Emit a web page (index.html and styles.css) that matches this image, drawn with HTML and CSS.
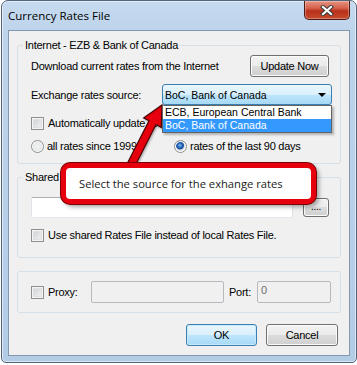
FILE: index.html
```html
<!DOCTYPE html>
<html lang="en">
<head>
  <meta charset="UTF-8">
  <meta name="viewport" content="width=device-width, initial-scale=1.0">
  <title>Currency Rates File</title>
  <link rel="stylesheet" href="styles.css">
</head>
<body>
  <div class="window">
    <div class="titlebar">
      <span class="title">Currency Rates File</span>
      <span class="close">
        <svg width="14" height="11" viewBox="0 0 14 11">
          <path d="M3 2 L11 9 M11 2 L3 9" stroke="#3b3b3b" stroke-width="4.2" stroke-linecap="square"/>
          <path d="M3 2 L11 9 M11 2 L3 9" stroke="#ffffff" stroke-width="2.2" stroke-linecap="square"/>
        </svg>
      </span>
    </div>

    <div class="client">
      <fieldset class="group group-internet">
        <legend>Internet - EZB &amp; Bank of Canada</legend>
        <div class="row row-download">
          <span>Download current rates from the Internet</span>
          <span class="btn btn-update">Update Now</span>
        </div>
        <div class="row row-source">
          <span>Exchange rates source:</span>
          <div class="combo">
            <span class="combo-text">BoC, Bank of Canada</span>
            <span class="combo-arrow"></span>
            <ul class="combo-list">
              <li>ECB, European Central Bank</li>
              <li class="selected">BoC, Bank of Canada</li>
            </ul>
          </div>
        </div>
        <div class="row row-auto">
          <span class="check"></span>
          <span>Automatically update at startup</span>
        </div>
        <div class="row row-range">
          <span class="opt opt-all"><span class="radio"></span>all rates since 1999</span>
          <span class="opt"><span class="radio checked"></span>rates of the last 90 days</span>
        </div>
      </fieldset>

      <fieldset class="group group-shared">
        <legend>Shared Rates File</legend>
        <div class="row row-path">
          <span class="textbox path-box"></span>
          <span class="btn btn-browse">....</span>
        </div>
        <div class="row row-useshared">
          <span class="check"></span>
          <span>Use shared Rates File instead of local Rates File.</span>
        </div>
      </fieldset>

      <fieldset class="group group-proxy">
        <div class="row row-proxy">
          <span class="proxy-label"><span class="check"></span>Proxy:</span>
          <span class="textbox disabled proxy-box"></span>
          <span class="port-label">Port:</span>
          <span class="textbox disabled port-box">0</span>
        </div>
      </fieldset>

      <div class="actions">
        <span class="btn btn-default">OK</span>
        <span class="btn btn-cancel">Cancel</span>
      </div>
    </div>

    <!-- annotation drawn over the dialog -->
    <svg class="arrow" width="50" height="72" viewBox="0 0 50 72">
      <polygon points="41,6 40.3,28.4 35,25.5 12.5,69.9 5.5,66.1 28,21.7 22.7,18.9"
               fill="#e6000d" stroke="#4a0000" stroke-width="1.2" stroke-linejoin="miter"/>
    </svg>
    <div class="callout">Select the source for the exhange rates</div>
  </div>
</body>
</html>
```

FILE: styles.css
```css
:root {
  --client: #f0f0f0;
  --group-line: #d5dfe5;
  --blue-border: #3c7fb1;
  --callout-red: #e6000d;
}

* {
  box-sizing: border-box;
}

body {
  margin: 0;
  background: #ffffff;
  font-family: 'Liberation Sans', Arial, sans-serif;
  font-size: 11px;
  letter-spacing: -0.25px;
  color: #000;
}

.window {
  position: relative;
  width: 356px;
  height: 363px;
  margin-left: 1px;
  padding: 0 6px 6px;
  border: 1px solid #52647a;
  border-radius: 7px 7px 5px 5px;
  background: linear-gradient(to bottom, #c6daef 0, #bed4eb 30px, #b3cce6 100%);
  box-shadow: inset 0 0 0 1px rgba(255,255,255,0.55);
  display: flex;
  flex-direction: column;
}

/* title bar */
.titlebar {
  height: 29px;
  display: flex;
  align-items: flex-start;
}

.title {
  font-family: 'Open Sans', sans-serif;
  font-size: 11.5px;
  letter-spacing: 0;
  line-height: 29px;
  color: #000;
}

.close {
  margin-left: auto;
  width: 46px;
  height: 19px;
  border: 1px solid #4e1a12;
  border-top: none;
  border-radius: 0 0 5px 5px;
  background: linear-gradient(to bottom, #e59483 0, #d5614c 40%, #b8301a 55%, #c64a2e 100%);
  box-shadow: inset 0 0 0 1px rgba(255,255,255,0.3);
  display: flex;
  align-items: center;
  justify-content: center;
}

/* client area */
.client {
  flex: 1;
  border: 1px solid #8597ad;
  background: var(--client);
  padding: 7px 8px 0;
  display: flex;
  flex-direction: column;
}

.group {
  margin: 0;
  min-width: 0;
  border: 1px solid var(--group-line);
  border-radius: 3px;
  padding: 3px 8px 10px 13px;
}

.group legend {
  margin-left: -8px;
  padding: 0 2px;
  line-height: 14px;
  font-size: 11px;
}

.row {
  display: flex;
  align-items: center;
}

.row-download {
  height: 22px;
}

.row-source {
  height: 21px;
  margin-top: 7px;
}

.row-auto {
  height: 14px;
  margin-top: 11px;
}

.row-range {
  height: 14px;
  margin-top: 9px;
}

.opt {
  display: flex;
  align-items: center;
}

.opt-all {
  width: 143px;
}

.group-shared {
  margin-top: 6px;
  padding-top: 13px;
  padding-bottom: 15px;
}

.row-path {
  height: 21px;
}

.row-useshared {
  height: 14px;
  margin-top: 10px;
}

.group-proxy {
  margin-top: 13px;
  padding-top: 9px;
  padding-bottom: 9px;
}

.row-proxy {
  height: 22px;
}

.proxy-label {
  width: 60px;
  display: flex;
  align-items: center;
}

.port-label {
  width: 28px;
  margin-left: 5px;
}

.actions {
  display: flex;
  justify-content: flex-end;
  gap: 9px;
  margin-top: 11px;
  padding-right: 3px;
}

/* controls */
.btn {
  height: 22px;
  border: 1px solid #707070;
  border-radius: 3px;
  background: linear-gradient(to bottom, #f2f2f2 0, #ebebeb 50%, #dddddd 50%, #cfcfcf 100%);
  box-shadow: inset 0 0 0 1px #fbfbfb;
  display: flex;
  align-items: center;
  justify-content: center;
}

.btn-update {
  width: 79px;
  margin-left: auto;
  margin-right: 3px;
}

.btn-browse {
  width: 26px;
  height: 19px;
  margin-left: 10px;
  font-size: 10px;
  padding-bottom: 3px;
}

.btn-default {
  width: 71px;
  border-color: var(--blue-border);
  background: linear-gradient(to bottom, #eaf6fd 0, #d9f0fc 50%, #bee6fd 50%, #a7d9f5 100%);
  box-shadow: inset 0 0 0 1px #c6e9fb;
}

.btn-cancel {
  width: 72px;
}

.combo {
  position: relative;
  width: 170px;
  height: 21px;
  margin-left: auto;
  border: 1px solid var(--blue-border);
  border-radius: 3px;
  background: linear-gradient(to bottom, #eaf6fd 0, #d9f0fc 50%, #bee6fd 50%, #a7d9f5 100%);
  display: flex;
  align-items: center;
  padding-left: 2px;
  font-size: 10.5px;
  letter-spacing: 0;
}

.combo-arrow {
  margin-left: auto;
  margin-right: 5px;
  border-top: 4px solid #000;
  border-left: 4px solid transparent;
  border-right: 4px solid transparent;
}

.combo-list {
  position: absolute;
  z-index: 3;
  top: 20px;
  left: -1px;
  width: 170px;
  margin: 0;
  padding: 0;
  list-style: none;
  background: #fff;
  border: 1px solid #646464;
  box-shadow: 2px 2px 2px rgba(0,0,0,0.25);
}

.combo-list li {
  height: 13px;
  line-height: 13px;
  padding-left: 2px;
}

.combo-list .selected {
  background: #3399ff;
  color: #fff;
}

.check {
  width: 13px;
  height: 13px;
  flex: none;
  margin-right: 4px;
  border: 1px solid #8e8f8f;
  background: linear-gradient(135deg, #c9ced4 0, #eaeaeb 70%, #f6f6f6 100%);
  box-shadow: inset 0 0 0 1px #f4f4f4, inset 0 0 0 2px #dfe1e3;
}

.radio {
  width: 13px;
  height: 13px;
  flex: none;
  margin-right: 3px;
  border: 1px solid #8e8f8f;
  border-radius: 50%;
  background: radial-gradient(circle at 50% 50%, #f4f4f4 0, #dadcde 100%);
  box-shadow: inset 0 0 0 1px #fff;
}

.radio.checked {
  background: radial-gradient(circle at 45% 40%, #8dc3ef 0, #1f62b8 2.5px, #164c95 3.5px, #d7dde3 4.5px, #f0f0f0 100%);
}

.textbox {
  height: 21px;
  border: 1px solid;
  border-color: #abadb3 #dbdfe6 #e3e9ef #e2e3ea;
  border-radius: 2px;
  background: #fff;
}

.path-box {
  width: 262px;
}

.textbox.disabled {
  height: 22px;
  background: var(--client);
  border-color: #b6b9bd;
  color: #6d6d6d;
  padding: 2px 3px;
}

.proxy-box {
  width: 133px;
}

.port-box {
  width: 74px;
}

/* annotation */
.arrow {
  position: absolute;
  z-index: 1;
  left: 119px;
  top: 98px;
  filter: drop-shadow(1px 1px 1px rgba(0,0,0,0.35));
}

.callout {
  position: absolute;
  z-index: 2;
  left: 59px;
  top: 162px;
  width: 255px;
  height: 41px;
  border: 5px solid var(--callout-red);
  border-radius: 9px;
  background: #fff;
  box-shadow: 0 0 0 1px #7a0006, 3px 3px 4px rgba(0,0,0,0.35);
  padding-left: 13px;
  font-family: 'Open Sans', sans-serif;
  font-size: 11.2px;
  letter-spacing: 0;
  line-height: 31px;
  color: #1a1a1a;
}
```
